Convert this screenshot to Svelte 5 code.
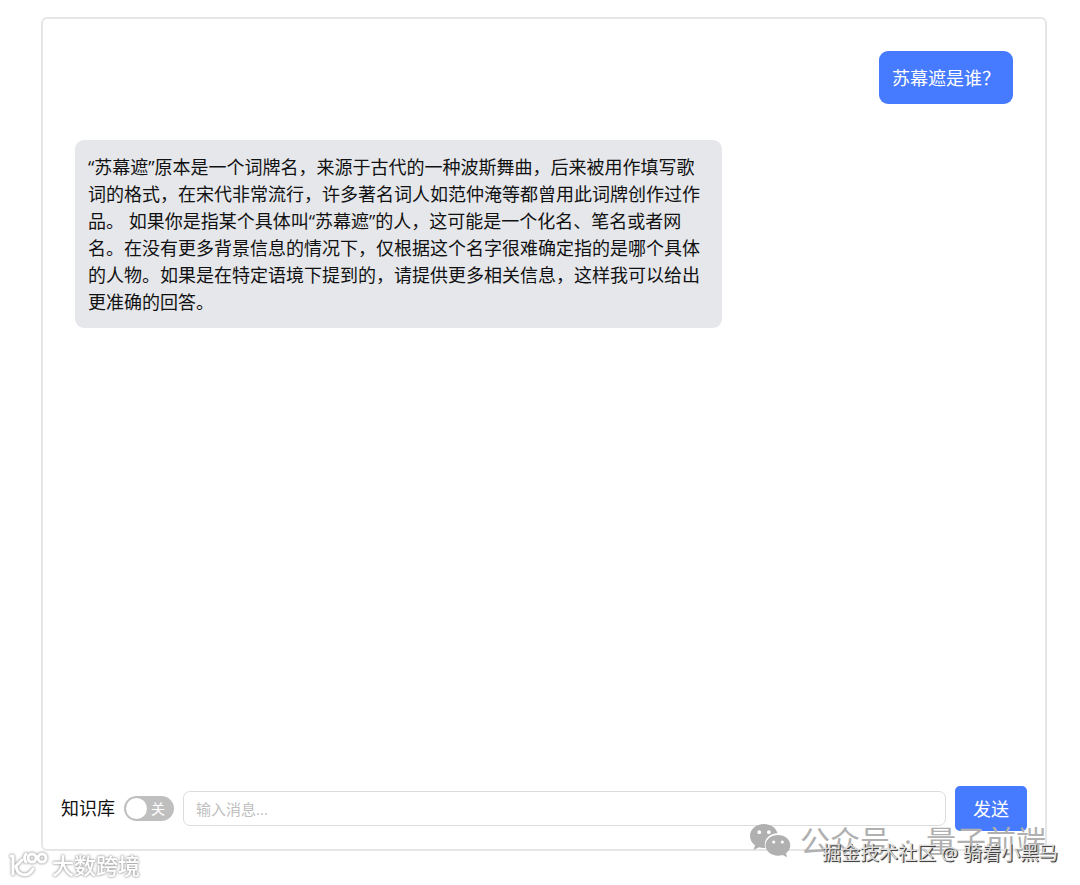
<script lang="ts">
  type Message = { id: number; role: 'user' | 'assistant'; text: string };

  let messages = $state<Message[]>([
    { id: 1, role: 'user', text: '苏幕遮是谁？' },
    {
      id: 2,
      role: 'assistant',
      text: '“苏幕遮”原本是一个词牌名，来源于古代的一种波斯舞曲，后来被用作填写歌词的格式，在宋代非常流行，许多著名词人如范仲淹等都曾用此词牌创作过作品。 如果你是指某个具体叫“苏幕遮”的人，这可能是一个化名、笔名或者网名。在没有更多背景信息的情况下，仅根据这个名字很难确定指的是哪个具体的人物。如果是在特定语境下提到的，请提供更多相关信息，这样我可以给出更准确的回答。',
    },
  ]);
  let draft = $state('');
  let useKnowledge = $state(false);

  function send(event: SubmitEvent) {
    event.preventDefault();
    const text = draft.trim();
    if (!text) return;
    messages.push({ id: messages.length + 1, role: 'user', text });
    draft = '';
  }
</script>

<div class="page">
  <main class="chat">
    <div class="messages">
      {#each messages as message (message.id)}
        <div class="bubble {message.role}">{message.text}</div>
      {/each}
    </div>

    <form class="composer" onsubmit={send}>
      <label for="knowledge">知识库</label>
      <span class="switch" class:on={useKnowledge}>
        <input id="knowledge" type="checkbox" role="switch" bind:checked={useKnowledge} />
        <span class="knob"></span>
        <span class="state">{useKnowledge ? '开' : '关'}</span>
      </span>
      <input class="text" type="text" aria-label="输入消息" placeholder="输入消息..." bind:value={draft} />
      <button type="submit">发送</button>
    </form>
  </main>

  <div class="mark account">
    <svg width="42" height="36" viewBox="0 0 42 36" aria-hidden="true">
      <path fill="#b0b0b0" fill-rule="evenodd" d="M15 1C7 1 1 6.300 1 13c0 4 2 7 5 9.300L4.500 27l5.500-2.800c2 .6 4 .9 6.300.7C14 17 20 10.500 28.500 10.300 27 4.500 21.500 1 15 1ZM10.300 7.300a1.900 1.900 0 1 1 0 3.800 1.900 1.900 0 0 1 0-3.800Zm9.600 0a1.900 1.900 0 1 1 0 3.800 1.900 1.900 0 0 1 0-3.800Z" />
      <path fill="#b0b0b0" fill-rule="evenodd" d="M29 12c7 0 12.300 4.600 12.300 10.300 0 3.400-1.800 6.100-4.300 8l1 4-4.300-2.200c-1.500.4-3 .6-4.700.6-7 0-12.500-4.600-12.500-10.400S22 12 29 12Zm-4.300 5.400a1.600 1.600 0 1 0 0 3.200 1.600 1.600 0 0 0 0-3.200Zm8.600 0a1.600 1.600 0 1 0 0 3.200 1.600 1.600 0 0 0 0-3.200Z" />
    </svg>
    <span class="name"><span>公众号</span><span>·</span><span>量子前端</span></span>
  </div>
  <div class="mark community">掘金技术社区 @ 骑着小黑马</div>
  <div class="mark brand">
    <svg width="42" height="30" viewBox="0 0 42 30" fill="none" stroke="#fff" stroke-width="3" stroke-linecap="round" stroke-linejoin="round" aria-hidden="true">
      <path d="M3 6h2v18M14 10l-6 6c1 10 12 12 17 3" />
      <circle cx="24" cy="8" r="4" />
      <circle cx="34" cy="8" r="4" />
      <path d="M18 4c-2 2-2 6 0 8" />
    </svg>
    <span>大数跨境</span>
  </div>
</div>

<style>
  :global(body) { margin: 0; background: #fff; }
  .page { position: relative; box-sizing: border-box; display: flex; min-height: 100vh; padding: 17px 33px 34px 41px; color: #111; font: 18px/27px 'Open Sans', 'Noto Sans CJK SC', sans-serif; }
  .chat { flex: 1; min-width: 0; display: flex; flex-direction: column; padding: 0 18px 18px; border: 2px solid #e6e6e6; border-radius: 6px; }
  .messages { flex: 1; display: flex; flex-direction: column; gap: 36px; padding: 32px 14px; }
  .bubble { box-sizing: border-box; max-width: 69%; padding: 14px 13px 12px; border-radius: 9px; overflow-wrap: anywhere; }
  .user { align-self: flex-end; background: #477bff; color: #fff; }
  .assistant { align-self: flex-start; background: #e5e7eb; }

  .composer { display: flex; align-items: center; gap: 9px; }
  .switch { position: relative; display: flex; align-items: center; justify-content: space-between; box-sizing: border-box; width: 50px; height: 25px; padding: 0 9px 0 2px; border-radius: 13px; background: #bfbfbf; }
  .switch.on { flex-direction: row-reverse; padding: 0 2px 0 9px; background: #477bff; }
  .switch input { position: absolute; inset: 0; width: 100%; height: 100%; margin: 0; opacity: 0; cursor: pointer; }
  .knob { width: 21px; height: 21px; border-radius: 50%; background: #fff; }
  .state { color: #fff; font-size: 14px; line-height: 25px; }
  .text { flex: 1; min-width: 0; box-sizing: border-box; height: 35px; padding: 0 12px; border: 1px solid #dcdcdc; border-radius: 7px; background: #fff; color: inherit; font: inherit; font-size: 15px; }
  .text::placeholder { color: #bfbfbf; opacity: 1; }
  button { padding: 10px 18px 8px; border: 0; border-radius: 5px; background: #477bff; color: #fff; font: inherit; cursor: pointer; }

  /* overlays stamped on the page corners */
  .mark { position: absolute; display: flex; align-items: center; white-space: nowrap; pointer-events: none; }
  .account { right: 34px; bottom: 22px; gap: 9px; color: #b0b0b0; font-size: 30px; line-height: 44px; }
  .name { display: flex; gap: 14px; }
  .community { right: 22px; bottom: 18px; color: #ddd; font-size: 19px; line-height: 27px; text-shadow: 1px 1px 0 #444, 1px 1px 1px #666; }
  .brand { left: 8px; bottom: 5px; gap: 2px; color: #fff; font-size: 22px; font-weight: 500; line-height: 30px; filter: drop-shadow(0 0 1px #999) drop-shadow(0 0 1px #ccc); }
</style>
